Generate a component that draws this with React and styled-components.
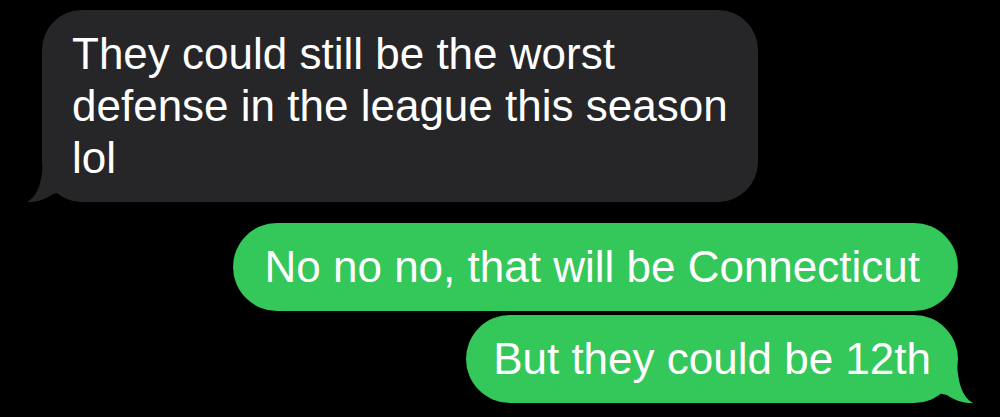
import React from 'react';
import styled, { createGlobalStyle } from 'styled-components';

const GlobalStyle = createGlobalStyle`
  html, body {
    margin: 0;
    padding: 0;
    background: #000;
  }
  body {
    font-family: "Liberation Sans", Arial, sans-serif;
  }
`;

const Thread = styled.div`
  width: 1000px;
  height: 417px;
  box-sizing: border-box;
  padding: 10px 42px 0 42px;
  display: flex;
  flex-direction: column;
  background: #000;
  overflow: hidden;
`;

const Bubble = styled.div`
  position: relative;
  align-self: ${p => (p.$mine ? 'flex-end' : 'flex-start')};
  margin-top: ${p => p.$gap || 0}px;
  padding: 18px ${p => p.$right ?? 30}px 18px ${p => p.$left ?? 30}px;
  border-radius: ${p => (p.$mine ? 44 : 40)}px;
  background: ${p => (p.$mine ? '#34c759' : '#262628')};
  color: #fff;
  font-size: 44px;
  line-height: 52px;
  white-space: nowrap;
`;

const Tail = styled.svg`
  position: absolute;
  bottom: 0;
  width: 43px;
  height: 40px;
  ${p => (p.$mine ? 'right: -15px;' : 'left: -15px; transform: scaleX(-1);')}
`;

function BubbleTail({ mine }) {
  return (
    <Tail $mine={mine} viewBox="0 0 43 40">
      <path
        d="M27 0 C28 20 32 34 43 40 C35 40.5 25 38 17 32 L12 31 L0 22 L0 0 Z"
        fill={mine ? '#34c759' : '#262628'}
      />
    </Tail>
  );
}

export default function App() {
  return (
    <>
      <GlobalStyle />
      <Thread>
        <Bubble>
          They could still be the worst
          <br />
          defense in the league this season
          <br />
          lol
          <BubbleTail />
        </Bubble>
        <Bubble $mine $gap={21} $left={32} $right={38}>
          No no no, that will be Connecticut
        </Bubble>
        <Bubble $mine $gap={4} $left={27} $right={27}>
          But they could be 12th
          <BubbleTail mine />
        </Bubble>
      </Thread>
    </>
  );
}
